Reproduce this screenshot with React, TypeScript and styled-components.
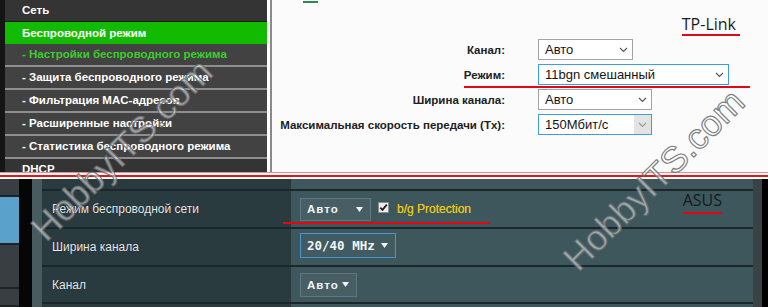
import styled, { createGlobalStyle } from 'styled-components';

const GlobalStyle = createGlobalStyle`
  html, body {
    margin: 0;
    padding: 0;
    background: #fff;
  }
  body {
    font-family: "Liberation Sans", Arial, sans-serif;
  }
`;

const Page = styled.div`
  position: relative;
  width: 768px;
  height: 307px;
  overflow: hidden;
  background: #fff;
`;

/* ---------- TP-Link part ---------- */

const Top = styled.section`
  display: flex;
  height: 172px;
  overflow: hidden;
`;

const Sidebar = styled.nav`
  width: 262px;
  padding-left: 5px;
  margin-right: 3px;
  background: #151515;
  display: flex;
  flex-direction: column;
`;

type ItemKind = 'top' | 'active' | 'current' | 'sub' | 'last';

const MenuItem = styled.div<{ $kind: ItemKind }>`
  flex: ${p => (p.$kind === 'last' ? '1' : 'none')};
  height: ${p => (p.$kind === 'active' ? '22px' : '21px')};
  line-height: ${p => (p.$kind === 'active' ? '22px' : '21px')};
  padding-left: 17px;
  font-size: 11.5px;
  font-weight: bold;
  white-space: nowrap;
  color: ${p => (p.$kind === 'current' ? '#3fcc2e' : '#fff')};
  background: ${p =>
    p.$kind === 'active' ? '#12bb00' : p.$kind === 'top' || p.$kind === 'last' ? '#343434' : '#424242'};
  border-bottom: ${p =>
    p.$kind === 'top' ? '1px solid #1d1d1d' : p.$kind === 'current' || p.$kind === 'sub' ? '2px solid #8e8e8e' : 'none'};
`;

const Content = styled.div`
  flex: 1;
  border-left: 2px solid #8a8a8a;
  background: #fbfbfb;
  display: flex;
  flex-direction: column;
`;

const GreenMark = styled.div`
  width: 15px;
  height: 2px;
  margin: 1px 0 0 31px;
  background: #2e8c4f;
`;

const Brand = styled.div`
  align-self: flex-end;
  margin: 12px 28px 0 0;
  padding: 0 4px 1px 0;
  font-family: "Open Sans", "Liberation Sans", sans-serif;
  font-size: 16px;
  line-height: 18px;
  color: #1b1b1b;
  border-bottom: 2px solid #e30613;
`;

const Form = styled.div`
  margin-top: 3px;
  display: grid;
  grid-template-columns: 233px max-content;
  grid-auto-rows: 21px;
  column-gap: 33px;
  row-gap: 4px;
`;

const Label = styled.div`
  align-self: center;
  text-align: right;
  font-size: 11.5px;
  font-weight: bold;
  color: #202020;
  white-space: nowrap;
`;

const TpSelect = styled.div<{ $w: number; $focus?: boolean }>`
  box-sizing: border-box;
  width: ${p => p.$w}px;
  height: 21px;
  display: flex;
  align-items: center;
  justify-content: space-between;
  padding-left: 6px;
  background: #fff;
  border: 1px solid ${p => (p.$focus ? '#3d9de0' : '#a3a3a3')};
  font-size: 13px;
  color: #151515;
`;

const ArrowBox = styled.span<{ $muted?: boolean }>`
  align-self: stretch;
  width: 17px;
  display: flex;
  align-items: center;
  justify-content: center;
  background: ${p => (p.$muted ? '#e3e3e3' : 'transparent')};
`;

const Chevron = ({ color = '#5a5a5a' }: { color?: string }) => (
  <svg width="9" height="6" viewBox="0 0 9 6">
    <path d="M1 1l3.5 3.5L8 1" fill="none" stroke={color} strokeWidth="1.2" />
  </svg>
);

/* ---------- divider ---------- */

const Divider = styled.div`
  box-sizing: border-box;
  height: 7px;
  padding-top: 2px;
  border-top: 1px solid #f08a8a;
  background: #fff;
`;

const RedRule = styled.div`
  height: 2px;
  background: #e01818;
`;

/* ---------- ASUS part ---------- */

const Bottom = styled.section`
  display: flex;
  height: 128px;
`;

const AsusNav = styled.div`
  width: 19px;
  display: flex;
  flex-direction: column;
  background: #1e2426;
`;

const NavBlock = styled.div<{ $h?: number; $on?: boolean }>`
  height: ${p => (p.$h ? `${p.$h}px` : 'auto')};
  flex: ${p => (p.$h ? 'none' : '1')};
  margin-bottom: 2px;
  background: ${p => (p.$on ? '#5aa1cb' : '#383e41')};
`;

const BlackBar = styled.div`
  width: 13px;
  background: #060606;
`;

const Rail = styled.div`
  width: 10px;
  background: #4a5b5f;
`;

const Panel = styled.div`
  flex: 1;
  display: flex;
  flex-direction: column;
`;

const Row = styled.div<{ $h: number; $line?: boolean }>`
  box-sizing: border-box;
  height: ${p => p.$h}px;
  display: grid;
  grid-template-columns: 249px 1fr;
  border-top: ${p => (p.$line ? '2px solid #1c272b' : 'none')};
`;

const LabelCell = styled.div`
  display: flex;
  align-items: center;
  padding-left: 10px;
  background: #2a3b40;
  color: #e6eaeb;
  font-size: 12px;
  text-shadow: 0 0 1px #111;
  white-space: nowrap;
`;

const ValueCell = styled.div`
  display: flex;
  align-items: center;
  padding-left: 9px;
  background: #3e575c;
`;

const AsusSelect = styled.div<{ $w: number; $h: number; $focus?: boolean; $mono?: boolean }>`
  box-sizing: border-box;
  width: ${p => p.$w}px;
  height: ${p => p.$h}px;
  display: flex;
  align-items: center;
  justify-content: space-between;
  padding: 0 7px 0 6px;
  background: ${p => (p.$focus ? '#405b61' : '#475f64')};
  border: 1px solid ${p => (p.$focus ? '#4b93cf' : '#60777c')};
  color: #f2f4f4;
  font-family: ${p => (p.$mono ? '"DejaVu Sans Mono", "Liberation Mono", monospace' : '"Liberation Sans", Arial, sans-serif')};
  font-size: ${p => (p.$mono ? '12.5px' : '11.5px')};
  font-weight: bold;
  letter-spacing: ${p => (p.$mono ? '0' : '1px')};
  margin-bottom: ${p => (p.$focus ? '3px' : '0')};
`;

const Triangle = () => (
  <svg width="7" height="5" viewBox="0 0 7 5">
    <path d="M0 0h7L3.5 5z" fill="#f4f4f4" />
  </svg>
);

const CheckBox = styled.span`
  display: inline-flex;
  margin-left: 7px;
  margin-bottom: 4px;
`;

const Protection = styled.span`
  margin-left: 8px;
  font-size: 12px;
  color: #e9c419;
  text-shadow: 0 0 0.6px #e9c419;
  white-space: nowrap;
`;

const AsusBrand = styled.div`
  align-self: flex-start;
  margin-left: auto;
  margin-right: 31px;
  padding-bottom: 3px;
  font-family: "Open Sans", "Liberation Sans", sans-serif;
  font-size: 16px;
  line-height: 18px;
  color: #141a1c;
  border-bottom: 2px solid #e30613;
`;

const Scroll = styled.div`
  width: 9px;
  background: #394245;
`;

const Edge = styled.div`
  width: 6px;
  background: #000;
`;

/* ---------- overlays ---------- */

const RedMark = styled.span<{ $x: number; $y: number; $w: number }>`
  position: absolute;
  left: ${p => p.$x}px;
  top: ${p => p.$y}px;
  width: ${p => p.$w}px;
  height: 2px;
  background: #e30613;
`;

const Watermark = styled.div<{ $x: number; $y: number }>`
  position: absolute;
  left: ${p => p.$x}px;
  top: ${p => p.$y}px;
  transform: translate(-50%, -50%) rotate(-45deg);
  font-family: "Liberation Sans", Arial, sans-serif;
  font-size: 36px;
  line-height: 1;
  white-space: nowrap;
  color: rgba(255, 255, 255, 0.5);
  -webkit-text-stroke: 1.2px rgba(100, 105, 108, 0.85);
  pointer-events: none;
`;

const menu: { label: string; kind: ItemKind }[] = [
  { label: 'Сеть', kind: 'top' },
  { label: 'Беспроводной режим', kind: 'active' },
  { label: '- Настройки беспроводного режима', kind: 'current' },
  { label: '- Защита беспроводного режима', kind: 'sub' },
  { label: '- Фильтрация MAC-адресов', kind: 'sub' },
  { label: '- Расширенные настройки', kind: 'sub' },
  { label: '- Статистика беспроводного режима', kind: 'sub' },
  { label: 'DHCP', kind: 'last' },
];

export default function App() {
  return (
    <>
      <GlobalStyle />
      <Page>
        <Top>
          <Sidebar>
            {menu.map(item => (
              <MenuItem key={item.label} $kind={item.kind}>
                {item.label}
              </MenuItem>
            ))}
          </Sidebar>
          <Content>
            <GreenMark />
            <Brand>TP-Link</Brand>
            <Form>
              <Label>Канал:</Label>
              <TpSelect $w={95}>
                Авто
                <ArrowBox><Chevron /></ArrowBox>
              </TpSelect>
              <Label>Режим:</Label>
              <TpSelect $w={191} $focus>
                11bgn смешанный
                <ArrowBox><Chevron /></ArrowBox>
              </TpSelect>
              <Label>Ширина канала:</Label>
              <TpSelect $w={114}>
                Авто
                <ArrowBox><Chevron /></ArrowBox>
              </TpSelect>
              <Label>Максимальная скорость передачи (Tx):</Label>
              <TpSelect $w={114} $focus>
                150Мбит/с
                <ArrowBox $muted><Chevron color="#9a9a9a" /></ArrowBox>
              </TpSelect>
            </Form>
          </Content>
        </Top>

        <Divider>
          <RedRule />
        </Divider>

        <Bottom>
          <AsusNav>
            <NavBlock $h={16} />
            <NavBlock $h={46} $on />
            <NavBlock $h={42} />
            <NavBlock />
          </AsusNav>
          <BlackBar />
          <Rail />
          <Panel>
            <Row $h={10}>
              <LabelCell />
              <ValueCell />
            </Row>
            <Row $h={38} $line>
              <LabelCell>Режим беспроводной сети</LabelCell>
              <ValueCell>
                <AsusSelect $w={71} $h={23}>
                  Авто
                  <Triangle />
                </AsusSelect>
                <CheckBox>
                  <svg width="11" height="11" viewBox="0 0 11 11">
                    <rect x="0.5" y="0.5" width="10" height="10" fill="#ececec" stroke="#8c8c8c" />
                    <path d="M2.3 5.6l2.2 2.3L8.8 2.6" fill="none" stroke="#1d1d1d" strokeWidth="1.7" />
                  </svg>
                </CheckBox>
                <Protection>b/g Protection</Protection>
                <AsusBrand>ASUS</AsusBrand>
              </ValueCell>
            </Row>
            <Row $h={38} $line>
              <LabelCell>Ширина канала</LabelCell>
              <ValueCell>
                <AsusSelect $w={96} $h={25} $focus $mono>
                  20/40 MHz
                  <Triangle />
                </AsusSelect>
              </ValueCell>
            </Row>
            <Row $h={37} $line>
              <LabelCell>Канал</LabelCell>
              <ValueCell>
                <AsusSelect $w={57} $h={24}>
                  Авто
                  <Triangle />
                </AsusSelect>
              </ValueCell>
            </Row>
            <Row $h={5} $line>
              <LabelCell />
              <ValueCell />
            </Row>
          </Panel>
          <Scroll />
          <Edge />
        </Bottom>

        <RedMark $x={464} $y={86} $w={286} />
        <RedMark $x={283} $y={222} $w={207} />

        <Watermark $x={122} $y={150}>HobbyITS.com</Watermark>
        <Watermark $x={654} $y={180}>HobbyITS.com</Watermark>
      </Page>
    </>
  );
}
